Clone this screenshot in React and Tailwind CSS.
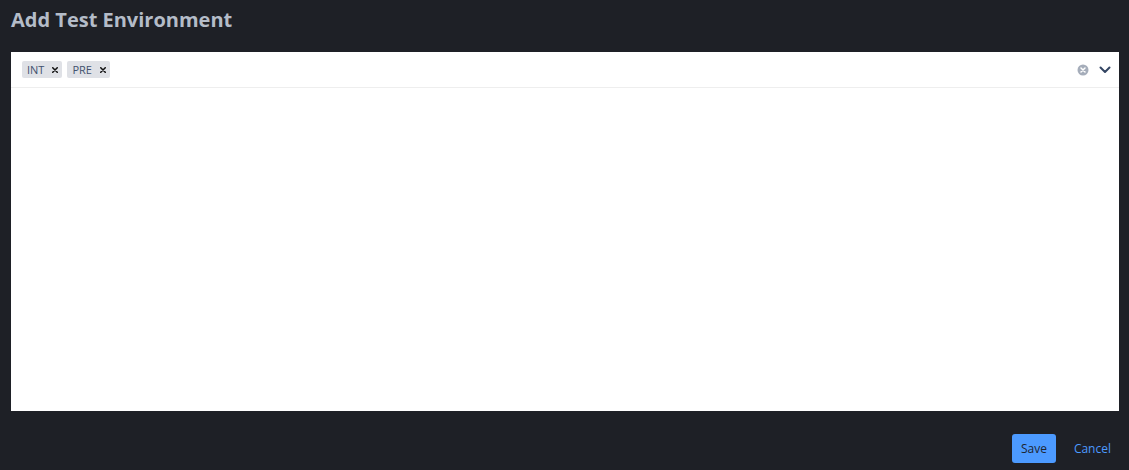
export default function App() {
  const font = { fontFamily: '"Open Sans", "Noto Sans", sans-serif' };
  return (
    <div className="w-[1129px] h-[470px] bg-[#1e2026] flex flex-col" style={font}>
      <h1 className="px-[11px] pt-[6px] h-[52px] text-[20px] font-bold text-[#b4bcc8] leading-[28px]">
        Add Test Environment
      </h1>
      <div className="ml-[11px] mr-[10px] h-[359px] bg-white flex flex-col">
        <div className="h-[36px] border-b border-[#eeeeee] flex items-center pl-[11px] pr-[8px]">
          <div className="flex gap-[5px] flex-1">
            {["INT", "PRE"].map((t) => (
              <div key={t} className="h-[17px] bg-[#dfe1e6] rounded-[2px] flex items-center pl-[5px] pr-[4px] text-[11px] text-[#42526e] leading-none">
                <span>{t}</span>
                <svg className="ml-[8px]" width="6" height="6" viewBox="0 0 8 8">
                  <path d="M1 1L7 7M7 1L1 7" stroke="#111" strokeWidth="2" strokeLinecap="round" />
                </svg>
              </div>
            ))}
          </div>
          <svg width="12" height="12" viewBox="0 0 12 12" className="mr-[10px]">
            <circle cx="6" cy="6" r="5.5" fill="#a5adba" />
            <path d="M4 4L8 8M8 4L4 8" stroke="#fff" strokeWidth="1.5" strokeLinecap="round" />
          </svg>
          <svg width="12" height="8" viewBox="0 0 12 8">
            <path d="M1.5 1.5L6 6L10.5 1.5" fill="none" stroke="#344563" strokeWidth="2" strokeLinecap="round" strokeLinejoin="round" />
          </svg>
        </div>
      </div>
      <div className="flex justify-end items-center gap-[9px] pr-[9px] pt-[23px]">
        <button className="h-[29px] px-[9px] rounded-[3px] bg-[#4c9aff] text-[12px] text-[#1e2530]">Save</button>
        <button className="h-[29px] px-[9px] text-[12px] text-[#4c9aff]">Cancel</button>
      </div>
    </div>
  );
}
